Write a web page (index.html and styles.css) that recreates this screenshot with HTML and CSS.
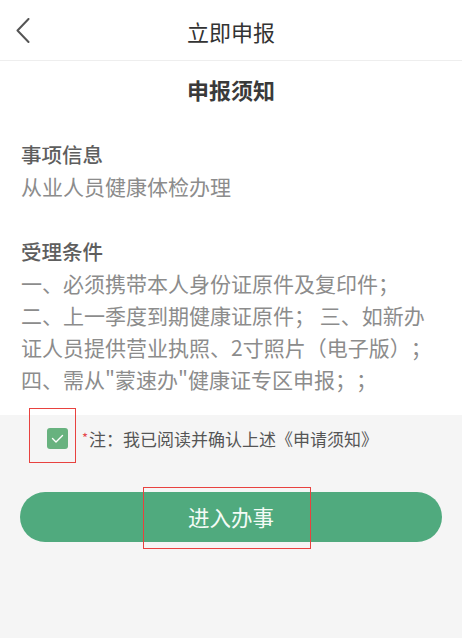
FILE: index.html
```html
<!DOCTYPE html>
<html lang="zh-CN">
<head>
<meta charset="utf-8">
<title>立即申报</title>
<link rel="stylesheet" href="styles.css">
</head>
<body>
<div class="page">
  <header class="header">
    <div class="back">
      <svg width="14" height="26" viewBox="0 0 14 26"><polyline points="12.5,1 1.5,12.5 12.5,24" fill="none" stroke="#555" stroke-width="2" stroke-linecap="round" stroke-linejoin="round"/></svg>
    </div>
    <div class="title">立即申报</div>
    <div></div>
  </header>
  <main class="content">
    <h1 class="notice-title">申报须知</h1>
    <section class="block">
      <h2 class="block-title">事项信息</h2>
      <p class="block-text">从业人员健康体检办理</p>
    </section>
    <section class="block">
      <h2 class="block-title">受理条件</h2>
      <p class="block-text">一、必须携带本人身份证原件及复印件；<br>二、上一季度到期健康证原件； 三、如新办证人员提供营业执照、2寸照片（电子版）；<br>四、需从"蒙速办"健康证专区申报；；</p>
    </section>
  </main>
  <footer class="footer">
    <div class="agree">
      <div class="checkbox">
        <svg width="21" height="21" viewBox="0 0 21 21"><polyline points="5.5,10.5 9,14 15.5,7.5" fill="none" stroke="#fff" stroke-width="1.4" stroke-linecap="round" stroke-linejoin="round"/></svg>
        <span class="mark mark-check"></span>
      </div>
      <div class="agree-text"><span class="star">*</span>注：我已阅读并确认上述《申请须知》</div>
    </div>
    <button class="submit" type="button">进入办事<span class="mark mark-btn"></span></button>
  </footer>
</div>
</body>
</html>
```

FILE: styles.css
```css
* { box-sizing: border-box; }
html, body { margin: 0; padding: 0; }
body {
  font-family: "Noto Sans CJK SC", "Noto Sans", sans-serif;
  background: #f5f5f5;
  width: 462px;
  height: 638px;
  overflow: hidden;
  text-spacing-trim: space-all;
  font-kerning: none;
}
.page { display: flex; flex-direction: column; }
.header {
  height: 61px;
  background: #fff;
  border-bottom: 1px solid #eeeeee;
  display: grid;
  grid-template-columns: 60px 1fr 60px;
  align-items: center;
}
.back { display: flex; align-items: center; padding-left: 16px; padding-top: 2px; }
.title {
  text-align: center;
  font-size: 22px;
  color: #333;
  line-height: 30px;
  padding-top: 2px;
}
.content {
  background: #fff;
  padding: 13px 20px 20px 21px;
}
.notice-title {
  margin: 0;
  text-align: center;
  font-size: 22px;
  font-weight: bold;
  color: #3a3a3a;
  line-height: 30px;
  padding-right: 1px;
}
.block { margin-top: 34px; }
.block + .block { margin-top: 33px; }
.block-title {
  margin: 0;
  font-size: 20.5px;
  font-weight: 500;
  color: #5e5e5e;
  line-height: 32px;
}
.block-text {
  margin: 0;
  font-size: 21px;
  color: #8c8c8c;
  line-height: 32px;
}
.footer {
  padding: 12px 20px 0 20px;
  display: flex;
  flex-direction: column;
}
.agree {
  display: flex;
  align-items: center;
  padding-left: 27px;
}
.checkbox {
  position: relative;
  width: 21px;
  height: 21px;
  border-radius: 3px;
  background: #68b27f;
  display: flex;
}
.agree-text {
  margin-left: 14px;
  font-size: 17px;
  color: #555;
  line-height: 22px;
}
.star {
  color: #e5484d;
  font-size: 13px;
  vertical-align: 3px;
  margin-right: 1px;
}
.mark {
  position: absolute;
  border: 1.5px solid #e8423f;
}
.mark-check {
  left: -18px;
  top: -20px;
  width: 47px;
  height: 55px;
}
.submit {
  position: relative;
  margin-top: 42px;
  height: 50px;
  border: none;
  border-radius: 25px;
  background: #50aa7e;
  color: #f4fbf6;
  font-family: inherit;
  font-size: 21.5px;
  padding: 0;
  line-height: 50px;
}
.mark-btn {
  left: 123px;
  top: -5px;
  width: 168px;
  height: 62px;
}
```
